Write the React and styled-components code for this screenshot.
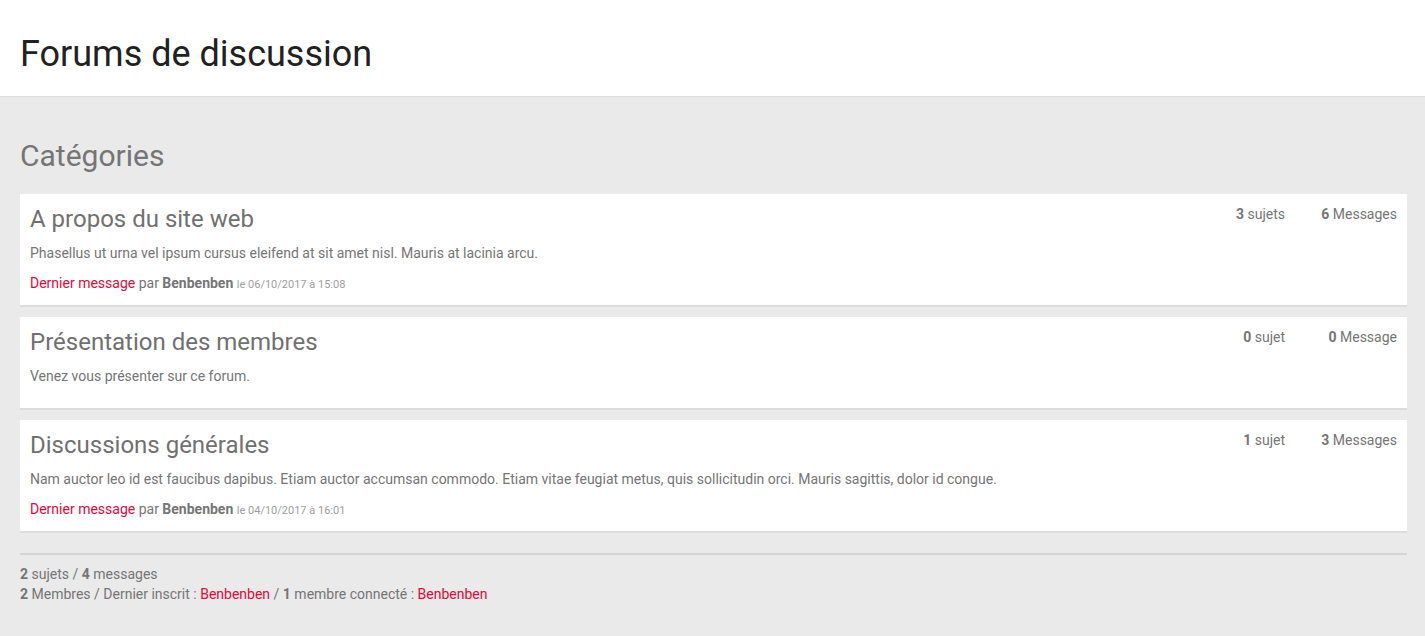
import React from 'react';
import styled, { createGlobalStyle } from 'styled-components';

const GlobalStyle = createGlobalStyle`
  body {
    margin: 0;
    background: #eaeaea;
    font-family: Roboto, "Liberation Sans", sans-serif;
    color: #757575;
  }
`;

const categories = [
  {
    title: 'A propos du site web',
    description: 'Phasellus ut urna vel ipsum cursus eleifend at sit amet nisl. Mauris at lacinia arcu.',
    topics: 3,
    messages: 6,
    last: { author: 'Benbenben', date: '06/10/2017 à 15:08' },
  },
  {
    title: 'Présentation des membres',
    description: 'Venez vous présenter sur ce forum.',
    topics: 0,
    messages: 0,
  },
  {
    title: 'Discussions générales',
    description:
      'Nam auctor leo id est faucibus dapibus. Etiam auctor accumsan commodo. Etiam vitae feugiat metus, quis sollicitudin orci. Mauris sagittis, dolor id congue.',
    topics: 1,
    messages: 3,
    last: { author: 'Benbenben', date: '04/10/2017 à 16:01' },
  },
];

const plural = (n, word) => (n > 1 ? `${word}s` : word);

const Category = ({ title, description, topics, messages, last }) => (
  <Card>
    <CardHead>
      <CardTitle>{title}</CardTitle>
      <Stats>
        <Stat>
          <b>{topics}</b> {plural(topics, 'sujet')}
        </Stat>
        <Stat>
          <b>{messages}</b> {plural(messages, 'Message')}
        </Stat>
      </Stats>
    </CardHead>
    <CardText $alone={!last}>{description}</CardText>
    {last && (
      <LastPost>
        <RedLink href="#">Dernier message</RedLink> par <b>{last.author}</b>{' '}
        <PostDate>le {last.date}</PostDate>
      </LastPost>
    )}
  </Card>
);

const App = () => (
  <>
    <GlobalStyle />
    <Header>
      <PageTitle>Forums de discussion</PageTitle>
    </Header>
    <Main>
      <SectionTitle>Catégories</SectionTitle>
      {categories.map(c => (
        <Category key={c.title} {...c} />
      ))}
      <Divider />
      <Summary>
        <div>
          <b>2</b> sujets / <b>4</b> messages
        </div>
        <div>
          <b>2</b> Membres / Dernier inscrit : <RedLink href="#">Benbenben</RedLink> / <b>1</b> membre
          connecté : <RedLink href="#">Benbenben</RedLink>
        </div>
      </Summary>
    </Main>
  </>
);

export default App;

const Header = styled.header`
  height: 96px;
  background: #fff;
  border-bottom: 1px solid #dedede;
  display: flex;
  align-items: center;
  padding: 0 20px;
`;

const PageTitle = styled.h1`
  margin: 12px 0 0;
  font-size: 36px;
  font-weight: 400;
  color: #212121;
`;

const Main = styled.main`
  padding: 0 18px 32px 20px;
`;

const SectionTitle = styled.h2`
  margin: 41px 0 20px;
  font-size: 30px;
  line-height: 36px;
  font-weight: 400;
  color: #757575;
`;

const Card = styled.section`
  background: #fff;
  padding: 10px;
  margin-bottom: 12px;
  box-shadow: 0 2px 0 #dcdcdc;
  font-size: 14px;
  line-height: 20px;
`;

const CardHead = styled.div`
  display: flex;
  justify-content: space-between;
  align-items: flex-start;
`;

const CardTitle = styled.h3`
  margin: 0;
  font-size: 24px;
  line-height: 30px;
  font-weight: 400;
  color: #707070;
`;

const Stats = styled.div`
  display: flex;
  gap: 12px;
`;

const Stat = styled.span`
  min-width: 100px;
  text-align: right;
`;

const CardText = styled.p`
  margin: 9px 0 ${props => (props.$alone ? '12px' : '10px')};
`;

const LastPost = styled.div`
  line-height: 20px;
`;

const RedLink = styled.a`
  color: #e2063b;
  text-decoration: none;
`;

const PostDate = styled.span`
  font-size: 11px;
  color: #9e9e9e;
`;

const Divider = styled.hr`
  margin: 22px 0 9px;
  border: 0;
  border-top: 2px solid #d4d4d4;
`;

const Summary = styled.div`
  font-size: 14px;
  line-height: 20px;
`;
